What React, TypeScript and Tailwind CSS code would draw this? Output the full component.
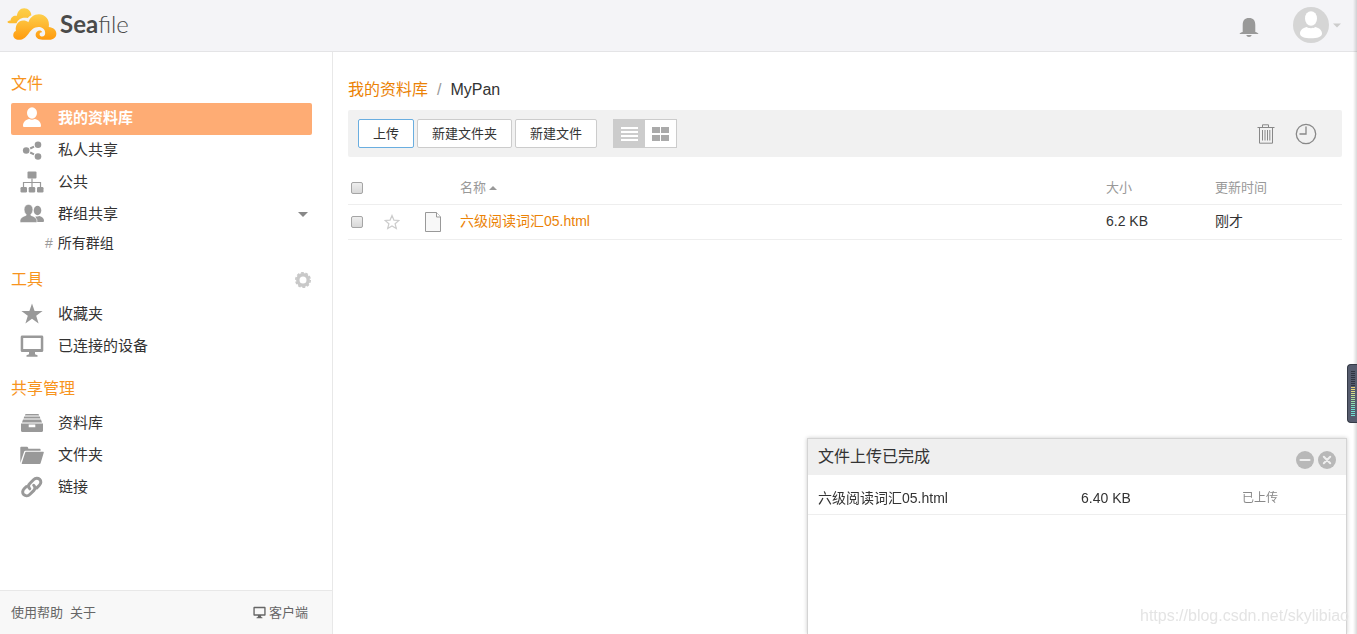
import React, { useState } from "react";

type IconProps = { className?: string };

type NavItem = {
  label: string;
  icon: React.FC<IconProps>;
  active?: boolean;
  caret?: boolean;
};

const UserIcon: React.FC<IconProps> = ({ className }) => (
  <svg viewBox="0 0 24 24" className={className} fill="currentColor">
    <ellipse cx="12" cy="7" rx="5" ry="5.700" />
    <path d="M3 19.800c0-4 3.200-6.100 6.200-6.700 1.700 1 3.900 1 5.600 0 3 .6 6.200 2.700 6.200 6.700 0 1-.6 1.300-1.500 1.300h-15c-.9 0-1.500-.3-1.500-1.300z" />
  </svg>
);

const ShareIcon: React.FC<IconProps> = ({ className }) => (
  <svg viewBox="0 0 24 24" className={className} fill="currentColor">
    <circle cx="6.200" cy="12.500" r="3.300" />
    <circle cx="18" cy="6.700" r="3.300" />
    <circle cx="18" cy="18.500" r="3.300" />
    <path
      d="M10.200 10.500l3.800-1.900M10.200 14.500l3.800 1.900"
      stroke="currentColor"
      strokeWidth="2"
    />
  </svg>
);

const SitemapIcon: React.FC<IconProps> = ({ className }) => (
  <svg viewBox="0 0 24 24" className={className} fill="currentColor">
    <rect x="7.500" y="1.500" width="9" height="7" rx="1" />
    <path
      d="M12 8.500v9M3.500 17v-4.500h17v4.500"
      fill="none"
      stroke="currentColor"
      strokeWidth="1.200"
    />
    <rect x="0.500" y="17" width="6.500" height="5.500" rx="1.200" />
    <rect x="8.700" y="17" width="6.500" height="5.500" rx="1.200" />
    <rect x="17" y="17" width="6.500" height="5.500" rx="1.200" />
  </svg>
);

const GroupIcon: React.FC<IconProps> = ({ className }) => (
  <svg viewBox="0 0 24 24" className={className} fill="currentColor">
    <ellipse cx="17.500" cy="8.500" rx="3.800" ry="4.700" />
    <path d="M15.500 14.200c1.400.5 2.700.4 4-.1 2.600.8 4.500 2.300 4.500 4.700 0 .8-.5 1.200-1.200 1.200h-6z" />
    <path
      d="M8.500 2.400c2.700 0 4.400 2.200 4.400 5 0 2.200-.8 3.900-2 4.900v1.100c3.600 1 6.100 2.800 6.100 5.700 0 1-.6 1.500-1.500 1.500h-14c-.9 0-1.500-.5-1.500-1.500 0-2.900 2.500-4.700 6.100-5.700v-1.100c-1.200-1-2-2.700-2-4.900 0-2.800 1.700-5 4.400-5z"
      stroke="#fff"
      strokeWidth="0.600"
    />
  </svg>
);

const StarIcon: React.FC<IconProps> = ({ className }) => (
  <svg viewBox="0 0 24 24" className={className} fill="currentColor">
    <path d="M12 1.500l2.600 7.600h8l-6.400 4.700 2.400 7.700-6.600-4.700-6.600 4.700 2.400-7.700L1.400 9.100h8z" />
  </svg>
);

const MonitorIcon: React.FC<IconProps> = ({ className }) => (
  <svg viewBox="0 0 24 24" className={className} fill="currentColor">
    <path
      fillRule="evenodd"
      d="M2.200 1.500h19.600c.9 0 1.500.6 1.500 1.500v13.500c0 .9-.6 1.500-1.500 1.500H15v2.200l2.500 1v1.600h-11v-1.600l2.500-1V18H2.200c-.9 0-1.500-.6-1.500-1.500V3c0-.9.6-1.500 1.500-1.500zM3.200 4v11h17.600V4z"
    />
  </svg>
);

const DrawerIcon: React.FC<IconProps> = ({ className }) => (
  <svg viewBox="0 0 24 24" className={className} fill="currentColor">
    <path d="M5.500 3h13l.6 1.400H4.900zM4.200 5.600h15.600l.6 1.800H3.600zM3 8.600h18l1 3H2z" />
    <path
      fillRule="evenodd"
      d="M1 12.500h22v7.300c0 .7-.5 1.200-1.200 1.200H2.200C1.500 21 1 20.500 1 19.800zM8.700 13.600v2.600h6.600v-2.600z"
    />
  </svg>
);

const FolderIcon: React.FC<IconProps> = ({ className }) => (
  <svg viewBox="0 0 24 24" className={className} fill="currentColor">
    <path d="M.3 20V4.700c0-.5.3-.9.800-.9H7c.5 0 .8.300 1 .8l.4 1.200h11.200c.6 0 1 .4 1 .9v1H5.500c-.7 0-1.100.3-1.300.9z" />
    <path d="M6 8.800h17.200c.5 0 .7.300.6.700l-3.200 10.800c-.1.500-.5.700-1 .7H2.200c-.5 0-.6-.3-.5-.7L5.200 9.500c.1-.5.4-.7.800-.7z" />
  </svg>
);

const LinkIcon: React.FC<IconProps> = ({ className }) => (
  <svg
    viewBox="0 0 24 24"
    className={className}
    fill="none"
    stroke="currentColor"
    strokeWidth="3"
    strokeLinecap="round"
  >
    <path d="M9.800 13.800c-1.700-1.700-1.500-3.800 0-5.300l3.700-3.700c1.900-1.900 4.600-1.900 6.200-.4 1.600 1.600 1.500 4.100-.3 5.900l-2.600 2.600" />
    <path d="M13.700 10.300c1.700 1.700 1.500 3.800 0 5.300L10 19.300c-1.900 1.900-4.600 1.900-6.200.4-1.600-1.600-1.500-4.100.3-5.900l2.300-2.300" />
  </svg>
);

const GearIcon: React.FC<IconProps> = ({ className }) => (
  <svg viewBox="0 0 16 16" className={className} fill="none" stroke="currentColor">
    <circle cx="8" cy="8" r="5.200" strokeWidth="3.400" />
    <circle cx="8" cy="8" r="7.200" strokeWidth="1.600" strokeDasharray="2.800 1.724" />
  </svg>
);

const BellIcon: React.FC<IconProps> = ({ className }) => (
  <svg viewBox="0 0 20 20" className={className} fill="currentColor">
    <path d="M3.700 15V8c0-4.500 2-7 6.300-7s6.300 2.500 6.300 7v7c1.400.4 2.700.9 3.200 2H.5c.5-1.100 1.800-1.600 3.200-2z" />
    <path d="M7.300 18h5.400c-.3 1.200-1.300 1.900-2.700 1.900S7.600 19.200 7.300 18z" />
  </svg>
);

const Caret: React.FC<IconProps> = ({ className }) => (
  <svg viewBox="0 0 10 5" className={className} fill="currentColor">
    <path d="M0 0h10L5 5z" />
  </svg>
);

const Logo: React.FC = () => (
  <a href="#" className="flex items-center gap-[3px] pb-0.5" aria-label="Seafile">
    <svg viewBox="20 19 152 100" className="h-[34px] w-[50px]">
      <defs>
        <linearGradient id="back" x1="0" y1="0" x2="0" y2="1">
          <stop offset="0" stopColor="#fdd04a" />
          <stop offset="1" stopColor="#fdbb30" />
        </linearGradient>
        <linearGradient id="front" x1="0" y1="0" x2="0" y2="1">
          <stop offset="0" stopColor="#fdcf4c" />
          <stop offset="1" stopColor="#ff9a0e" />
        </linearGradient>
      </defs>
      <path
        fill="url(#back)"
        d="M21 62c3-3 7-4 10-4 0-9 9-16 19-14 2-13 10-23 22-23 13 0 22 10 22 22-5 1-8 4-11 8-14-3-29 2-34 16H31c-5 0-9-2-10-5z"
      />
      <path
        fill="url(#front)"
        d="M47 90C44 72 55 58 69 58c7 0 12 2 16 6 4-15 17-25 32-25 20 0 34 17 30 39 13 1 23 9 23 20 0 12-9 19-21 19h-21c-13 0-21-6-21-15 0-8 6-13 12-13 4 0 7 2 8 5-4-1-8 2-8 6 0 5 4 7 8 7 6 0 9-5 9-11 0-10-8-18-20-18-14 0-22 9-29 18-9 12-17 21-31 21-10 0-17-6-17-14 0-7 3-11 8-13z"
      />
    </svg>
    <span className="font-['Lato',sans-serif] text-2xl leading-8 text-[#4a4a4a]">
      <b className="font-bold">Sea</b>
      <span className="font-light">file</span>
    </span>
  </a>
);

const sections: { title: string; gear?: boolean; items: NavItem[]; sub?: string }[] = [
  {
    title: "文件",
    items: [
      { label: "我的资料库", icon: UserIcon, active: true },
      { label: "私人共享", icon: ShareIcon },
      { label: "公共", icon: SitemapIcon },
      { label: "群组共享", icon: GroupIcon, caret: true },
    ],
    sub: "所有群组",
  },
  {
    title: "工具",
    gear: true,
    items: [
      { label: "收藏夹", icon: StarIcon },
      { label: "已连接的设备", icon: MonitorIcon },
    ],
  },
  {
    title: "共享管理",
    items: [
      { label: "资料库", icon: DrawerIcon },
      { label: "文件夹", icon: FolderIcon },
      { label: "链接", icon: LinkIcon },
    ],
  },
];

const Sidebar: React.FC = () => (
  <aside className="flex w-[333px] shrink-0 flex-col border-r border-[#e8e8e8]">
    <nav className="flex flex-1 flex-col gap-[14px] pt-5 pr-5 pl-[11px]">
      {sections.map((section) => (
        <section key={section.title}>
          <div className="mb-[7px] flex items-center justify-between">
            <h3 className="text-base leading-6 text-[#f7941d]">{section.title}</h3>
            {section.gear && (
              <button aria-label="设置" className="mr-px text-[#c8c8c8]">
                <GearIcon className="size-4" />
              </button>
            )}
          </div>
          <ul>
            {section.items.map(({ label, icon: Icon, active, caret }) => (
              <li key={label}>
                <a
                  href="#"
                  className={`flex h-8 items-center pb-0.5 pl-[9px] text-[15px] leading-5 ${
                    active ? "rounded-xs bg-[#feac74] font-bold text-white" : "text-[#333]"
                  }`}
                >
                  <Icon
                    className={`mr-[14px] size-6 ${active ? "text-white" : "text-[#999]"}`}
                  />
                  {label}
                  {caret && (
                    <Caret className="mr-1 ml-auto h-[5px] w-[10px] text-[#888]" />
                  )}
                </a>
              </li>
            ))}
          </ul>
          {section.sub && (
            <a
              href="#"
              className="flex h-[23px] items-center gap-[5px] pl-[34px] text-sm leading-5 text-[#333]"
            >
              <span className="text-[#999]">#</span>
              {section.sub}
            </a>
          )}
        </section>
      ))}
    </nav>
    <footer className="flex h-11 items-center justify-between border-t border-[#e8e8e8] bg-[#f8f8f8] pr-6 pl-[11px] text-[13px] leading-5 text-[#666]">
      <div className="flex gap-[7px]">
        <a href="#">使用帮助</a>
        <a href="#">关于</a>
      </div>
      <a href="#" className="flex items-center gap-[3px]">
        <MonitorIcon className="size-[13px]" />
        客户端
      </a>
    </footer>
  </aside>
);

const CheckBox: React.FC<{ label: string }> = ({ label }) => (
  <input
    type="checkbox"
    aria-label={label}
    className="ml-[3px] block size-3 appearance-none rounded-xs border border-[#a5a5a5] bg-linear-to-b from-[#eee] to-[#d8d8d8]"
  />
);

const Toolbar: React.FC = () => {
  const button =
    "h-[29px] rounded-xs border bg-white px-[14px] text-[13px] leading-5 text-[#333]";

  return (
    <div className="flex h-[47px] items-center rounded-xs bg-[#f1f1f1] pr-[25px] pl-[10px]">
      <div className="flex gap-[3px]">
        <button className={`${button} border-[#6aaee0]`}>上传</button>
        <button className={`${button} border-[#ccc]`}>新建文件夹</button>
        <button className={`${button} border-[#ccc]`}>新建文件</button>
      </div>
      <div className="ml-4 flex h-[29px] w-16 border border-[#ccc] bg-white">
        <button aria-label="列表" className="flex flex-1 items-center justify-center bg-[#ccc]">
          <svg viewBox="0 0 17 14" className="h-[14px] w-[17px]" fill="#fff">
            <path d="M0 0h17v2H0zM0 4h17v2H0zM0 8h17v2H0zM0 12h17v2H0z" />
          </svg>
        </button>
        <button aria-label="网格" className="flex flex-1 items-center justify-center">
          <svg viewBox="0 0 17 14" className="h-[14px] w-[17px]" fill="#aaa">
            <path d="M0 0h8v6H0zM9 0h8v6H9zM0 8h8v6H0zM9 8h8v6H9z" />
          </svg>
        </button>
      </div>
      <div className="ml-auto flex items-center gap-5 text-[#888]">
        <button aria-label="回收站">
          <svg viewBox="0 0 18 20" className="h-5 w-[18px]" fill="none" stroke="currentColor">
            <path d="M.5 3.500h17M5.500 3V.8h6V3M2.500 4v15.200h13V4M5.500 6v10.500M8 6v10.500M10.500 6v10.500M12.800 6v10.500" />
          </svg>
        </button>
        <button aria-label="历史">
          <svg
            viewBox="0 0 22 22"
            className="size-[22px]"
            fill="none"
            stroke="currentColor"
            strokeWidth="1.300"
          >
            <circle cx="11" cy="11" r="9.700" />
            <path d="M11 3.500V11H4.500" />
          </svg>
        </button>
      </div>
    </div>
  );
};

const FileTable: React.FC = () => (
  <table className="mt-[14px] w-full table-fixed text-left text-sm leading-5 text-[#333]">
    <colgroup>
      <col className="w-8" />
      <col className="w-10" />
      <col className="w-10" />
      <col />
      <col className="w-[109px]" />
      <col className="w-[127px]" />
    </colgroup>
    <thead>
      <tr className="h-[33px] border-b border-[#eee] text-[13px] text-[#999]">
        <th className="pt-0.5">
          <CheckBox label="全选" />
        </th>
        <th />
        <th />
        <th className="pt-0.5 font-normal">
          <a href="#" className="flex items-center gap-[3px]">
            名称
            <Caret className="h-1 w-2 rotate-180" />
          </a>
        </th>
        <th className="pt-0.5 font-normal">大小</th>
        <th className="pt-0.5 font-normal">更新时间</th>
      </tr>
    </thead>
    <tbody>
      <tr className="h-[35px] border-b border-[#eee]">
        <td>
          <CheckBox label="六级阅读词汇05.html" />
        </td>
        <td>
          <button aria-label="收藏" className="ml-1 block text-[#ccc]">
            <svg
              viewBox="0 0 16 16"
              className="size-4"
              fill="none"
              stroke="currentColor"
              strokeWidth="1.200"
            >
              <path d="M8 1.500l1.900 4.600 5 .4-3.800 3.200 1.200 4.900L8 12l-4.300 2.600 1.200-4.900L1.100 6.500l5-.4z" />
            </svg>
          </button>
        </td>
        <td>
          <svg
            viewBox="0 0 18 20"
            className="ml-1 h-5 w-[18px]"
            fill="#f8f8f8"
            stroke="#999"
          >
            <path d="M1.500.5h11l4 4.500v14.500h-15z" />
            <path d="M12.500.5V5h4" fill="#fff" />
          </svg>
        </td>
        <td className="pb-0.5">
          <a href="#" className="text-[#eb8205]">
            六级阅读词汇05.html
          </a>
        </td>
        <td className="pb-0.5">6.2 KB</td>
        <td className="pb-0.5">刚才</td>
      </tr>
    </tbody>
  </table>
);

const UploadDialog: React.FC<{ onClose: () => void }> = ({ onClose }) => (
  <div className="fixed right-[10px] bottom-0 h-[196px] w-[540px] border border-b-0 border-[#d4d4d4] bg-white shadow-[0_0_4px_#ccc]">
    <div className="flex h-9 items-center justify-between bg-[#efefef] pr-[10px] pl-[10px]">
      <h3 className="text-base leading-6 text-[#333]">文件上传已完成</h3>
      <div className="flex gap-1 pt-[6px] text-[#b8b8b8]">
        <button aria-label="最小化">
          <svg viewBox="0 0 18 18" className="size-[18px]">
            <circle cx="9" cy="9" r="9" fill="currentColor" />
            <path d="M4.500 9h9" stroke="#efefef" strokeWidth="2.200" strokeLinecap="round" />
          </svg>
        </button>
        <button aria-label="关闭" onClick={onClose}>
          <svg viewBox="0 0 18 18" className="size-[18px]">
            <circle cx="9" cy="9" r="9" fill="currentColor" />
            <path
              d="M5.800 5.800l6.400 6.400M12.200 5.800l-6.400 6.400"
              stroke="#efefef"
              strokeWidth="2"
              strokeLinecap="round"
            />
          </svg>
        </button>
      </div>
    </div>
    <table className="w-full table-fixed text-sm leading-5 text-[#333]">
      <tbody>
        <tr className="h-[39px] border-b border-[#eee]">
          <td className="w-[273px] pt-[7px] pl-[10px]">六级阅读词汇05.html</td>
          <td className="w-[161px] pt-[7px]">6.40 KB</td>
          <td className="pt-[7px] text-xs leading-5 text-[#888]">已上传</td>
        </tr>
      </tbody>
    </table>
  </div>
);

// small level meter docked to the right side of the window
const levels = [
  "bg-[#2f3440]",
  "bg-[#2f3440]",
  "bg-[#2f3440]",
  "bg-[#2f3440]",
  "bg-[#2f3440]",
  "bg-[#2f3440]",
  "bg-[#2f3440]",
  "bg-[#2f3440]",
  "bg-[#e8d070]",
  "bg-[#e8d878]",
  "bg-[#e0dc80]",
  "bg-[#d4e088]",
  "bg-[#c4e090]",
  "bg-[#b8e098]",
  "bg-[#a8e0a0]",
  "bg-[#9ce0a8]",
  "bg-[#90e0b0]",
  "bg-[#84e0b8]",
  "bg-[#78e0c8]",
  "bg-[#70e0d0]",
  "bg-[#70e0d0]",
  "bg-[#70e0d0]",
  "bg-[#70e0d0]",
];

const DockMeter: React.FC = () => (
  <div className="fixed top-[364px] right-0 flex h-[59px] w-[10px] flex-col gap-px rounded-l border border-r-0 border-[#343a46] bg-[#565c6e] pt-[6px] pr-[2px] pl-[3px]">
    {levels.map((color, i) => (
      <span key={i} className={`h-px shrink-0 ${color}`} />
    ))}
  </div>
);

const App: React.FC = () => {
  const [showUpload, setShowUpload] = useState<boolean>(true);

  return (
    <div className="flex h-screen flex-col bg-white font-['Liberation_Sans','Noto_Sans_CJK_SC',sans-serif]">
      <header className="flex h-[52px] shrink-0 items-center justify-between border-b border-[#e4e4e6] bg-[#f4f4f7] pr-4 pb-px pl-[7px]">
        <Logo />
        <div className="flex items-center">
          <button aria-label="通知" className="mr-[34px] pt-1 text-[#999]">
            <BellIcon className="size-5" />
          </button>
          <button aria-label="帐户" className="flex items-center gap-1 text-[#ccc]">
            <svg viewBox="0 0 36 36" className="size-9">
              <circle cx="18" cy="18" r="18" fill="#d5d5d5" />
              <ellipse cx="18" cy="11.500" rx="6" ry="7.300" fill="#fff" />
              <path
                d="M7 26.500c0-3.500 3-5.500 6.500-6.500 2.500 1.600 6.500 1.600 9 0 3.500 1 6.500 3 6.500 6.500 0 3.500-5 4.700-11 4.700S7 30 7 26.500z"
                fill="#fff"
              />
            </svg>
            <Caret className="h-[5px] w-2" />
          </button>
        </div>
      </header>
      <div className="flex min-h-0 flex-1">
        <Sidebar />
        <main className="min-w-0 flex-1 pt-[26px] pr-[15px] pl-[15px]">
          <div className="mb-2 flex gap-[9px] text-base leading-6 text-[#333]">
            <a href="#" className="text-[#eb8205]">
              我的资料库
            </a>
            <span className="text-[#999]">/</span>
            <span>MyPan</span>
          </div>
          <Toolbar />
          <FileTable />
        </main>
      </div>
      <div className="pointer-events-none fixed inset-y-0 right-0 w-1 bg-linear-to-r from-transparent to-black/15" />
      {showUpload && <UploadDialog onClose={() => setShowUpload(false)} />}
      <DockMeter />
      <p className="pointer-events-none fixed right-2 bottom-[6px] text-base leading-6 text-[#e4e4e4]">
        https://blog.csdn.net/skylibiao
      </p>
    </div>
  );
};

export default App;
